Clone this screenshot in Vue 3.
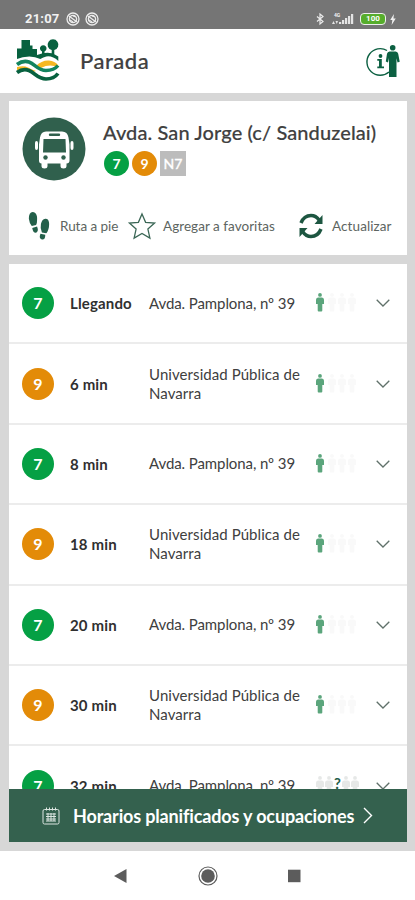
<script setup>
  import { ref } from 'vue'

  const pamplona = 'Avda. Pamplona, nº 39'
  const upna = 'Universidad Pública de Navarra'

  const arrivals = ref([
    { line: '7', time: 'Llegando', dest: pamplona, known: true },
    { line: '9', time: '6 min', dest: upna, known: true },
    { line: '7', time: '8 min', dest: pamplona, known: true },
    { line: '9', time: '18 min', dest: upna, known: true },
    { line: '7', time: '20 min', dest: pamplona, known: true },
    { line: '9', time: '30 min', dest: upna, known: true },
    { line: '7', time: '32 min', dest: pamplona, known: false },
  ])

  const signal = [2, 4, 6, 8, 10]
  const person = 'M4 0a1.8 1.8 0 1 1 0 3.8a1.8 1.8 0 1 1 0-3.8zM2 4.5h4q2 .3 2 2.3v4.2h-1.7v6.5q0 1-1 1h-2.6q-1 0-1-1V11H0V6.800q0-2 2-2.300z'
</script>

<template>
  <div class="screen">
    <div class="status">
      <span class="clock">21:07</span>
      <svg v-for="n in 2" :key="n" class="notif" viewBox="0 0 14 14">
        <circle cx="7" cy="7" r="6" />
        <circle cx="7" cy="7" r="3.600" />
        <path d="M3 4l8 6M7 4l3 1M4 8l3 2" />
      </svg>
      <div class="status-right">
        <svg class="bt" viewBox="0 0 8 12"><path d="M1 3.500l6 5L4 11V1l3 2.500-6 5" /></svg>
        <div class="net">
          <span class="net-type">4G</span>
          <svg class="net-arrows" viewBox="0 0 6 4"><path d="M0 4l1.500-3L3 4zM3.500 1h2.500L4.800 4z" /></svg>
          <svg class="bars" viewBox="0 0 15 11">
            <rect v-for="(h, i) in signal" :key="h" :x="i * 3" :y="11 - h" width="2.200" :height="h" />
          </svg>
        </div>
        <div class="battery">100</div>
        <svg class="bolt" viewBox="0 0 6 12"><path d="M4 0L0 6.500h2.300L1.500 12L6 5H3.500z" /></svg>
      </div>
    </div>

    <header class="header">
      <svg class="logo" viewBox="0 0 43 43">
        <path class="yellow" d="M1 28q7-1.500 11 .5 4 2 8 3.500-3 1.500-7 0-6-3-12-.5zM20 27q6-6 13-5.500 6 .5 9 4.500v2.500q-8-4-17 .5z" />
        <path class="dark" d="M1 19V9.500h4.500V1H14v5.500h2.500V10H21v6l5-1.500v-2a3.300 3.300 0 1 1 2.500 0V14q4-.6 7.200.3V11a5.400 5.400 0 1 1 2.600 0v4.300l4 2.200v4.500q-6-5.500-12-4.500-3 .5-6 2.500-5-2.500-11-2.500-7 0-12.300 2.500z" />
        <path class="wave green" d="M1 25.500q6-4.500 12-2.500c6 2 9 8.500 17 8.500q8 0 12-5" />
        <path class="wave" d="M1 33.500q6-4.500 12-2c6 2.500 9 8.500 17 8.500q8 0 12-5.500" />
      </svg>
      <h1>Parada</h1>
      <svg class="info" viewBox="0 0 34 33">
        <path class="ring" d="M21 5.500A13.300 13.300 0 1 0 23 27" />
        <circle cx="14.500" cy="11" r="1.900" />
        <path d="M11.300 14h4.500v7.500h2.200v1.800h-6.700v-1.800h1.700v-5.700h-1.700z" />
        <circle cx="26.700" cy="2.800" r="2.800" />
        <path d="M23.500 6.500h6.200q2 .2 2.500 2.200l1.500 8-2.200.8-1-4.300V32h-7.500V13l-1 4.400-2.200-.8 1.200-7.900q.5-2 2.500-2.200z" />
      </svg>
    </header>

    <main class="content">
      <section class="stop">
        <div class="stop-top">
          <svg class="bus" viewBox="0 0 64 64">
            <circle cx="32" cy="32" r="31.500" fill="#30604d" />
            <path fill="#fff" d="M24 14.500h16q5.500 0 6.500 6l1 7v16q0 3-3 3v2.500q0 2.500-3 2.500t-3-2.500v-2.500h-13v2.500q0 2.500-3 2.500t-3-2.500v-2.500q-2.500 0-2.500-3v-16l1-7q1-6 6-6zM13 26q0-2 1.500-2t1.500 2v5q0 2-1.500 2t-1.500-2zM48.500 26q0-2 1.500-2t1.500 2v5q0 2-1.500 2t-1.500-2z" />
            <path fill="#30604d" d="M28 16.500h9a1.200 1.200 0 0 1 0 2.400h-9a1.200 1.200 0 0 1 0-2.400zM21.500 22h22l.5 13.500h-23z" />
            <circle cx="23.500" cy="40.500" r="2.200" fill="#30604d" />
            <circle cx="41.500" cy="40.500" r="2.200" fill="#30604d" />
          </svg>
          <div class="stop-info">
            <h2>Avda. San Jorge (c/ Sanduzelai)</h2>
            <div class="lines">
              <span class="line small l7">7</span>
              <span class="line small l9">9</span>
              <span class="night">N7</span>
            </div>
          </div>
        </div>
        <div class="actions">
          <svg class="steps" viewBox="0 0 22 30">
            <path d="M4.500 0C8 0 9.500 4 9 8.500q0 4-1 5L3.500 14.500Q1 11.500.5 7 .5 0 4.500 0zM4 16.500l5-1.500q2 5-1 6.500-3 .5-4-5zM17.500 7c4-.5 4.500 5 3.700 9-.7 3-1.700 5.500-2.700 6l-4.500-.8q-2-4-1-8.700 1-5 4.500-5.500zM12.500 22.500l5 1q0 5.500-3.500 5-3.500-1-1.500-6z" />
          </svg>
          <span class="walk">Ruta a pie</span>
          <svg class="star" viewBox="0 0 28 28"><path d="M14 2l3.600 8.300 9 .8-6.700 6 2 9L14 21.500 6.100 26.100l2-9-6.700-6 9-.8z" /></svg>
          <span class="fav">Agregar a favoritas</span>
          <svg class="reload" viewBox="0 0 24 26">
            <path class="arc" d="M2 10Q5 2.500 12 2.500q5 0 8 4.500M22 16q-3 7.500-10 7.500-5 0-8-4.500" />
            <path d="M23.500 2v9h-8zM.5 24v-9h8z" />
          </svg>
          <span class="update">Actualizar</span>
        </div>
      </section>

      <section class="arrivals">
        <div v-for="(a, i) in arrivals" :key="i" class="row">
          <span class="line" :class="'l' + a.line">{{ a.line }}</span>
          <strong>{{ a.time }}</strong>
          <span class="dest" :class="{ tight: a.dest === pamplona }">{{ a.dest }}</span>
          <svg v-if="a.known" class="people" viewBox="0 0 44 20">
            <path :d="person" fill="#5ba57c" />
            <path v-for="n in 3" :key="n" :d="person" :transform="'translate(' + (n * 10 + 2) + ' 0)'" fill="#f9f9f9" />
          </svg>
          <div v-else class="people unknown">
            <svg viewBox="0 0 44 20">
              <path v-for="x in [0, 9, 26, 35]" :key="x" :d="person" :transform="'translate(' + x + ' 0)'" fill="#e6e8e7" />
            </svg>
            <b>?</b>
          </div>
          <svg class="chevron" viewBox="0 0 14 8"><path d="M.7.7L7 7 13.300.7" /></svg>
        </div>
        <button type="button" class="schedule">
          <svg class="calendar" viewBox="0 0 18 18">
            <rect x="1" y="2.500" width="16" height="14.500" rx="1.500" />
            <path d="M4.500.5v3M7.500.5v3M10.500.5v3M13.500.5v3M4 7h10M4 9.500h10M4 12h10M4 14h10M6 6v8M9 6v8M12 6v8" />
          </svg>
          <span>Horarios planificados y ocupaciones</span>
          <svg class="next" viewBox="0 0 10 17"><path d="M1 1l7.500 7.500L1 16" /></svg>
        </button>
      </section>
    </main>

    <nav class="nav">
      <svg viewBox="0 0 20 20"><path d="M3 10l12.500-7v14z" /></svg>
      <svg viewBox="0 0 20 20"><circle cx="10" cy="10" r="9" fill="none" stroke="#5c5c5c" stroke-width="1.200" /><circle cx="10" cy="10" r="6.800" /></svg>
      <svg viewBox="0 0 20 20"><rect x="4" y="3.700" width="12.500" height="12.500" /></svg>
    </nav>
  </div>
</template>

<style>
  body {
    margin: 0;
  }
</style>

<style scoped>
  .screen {
    display: flex;
    flex-direction: column;
    width: 415px;
    height: 900px;
    overflow: hidden;
    background: #fff;
    color: #404040;
    font-family: Lato, "Liberation Sans", sans-serif;
  }

  .screen * {
    box-sizing: border-box;
  }

  svg {
    display: block;
    flex: none;
    overflow: visible;
  }

  .status {
    display: flex;
    align-items: center;
    height: 29px;
    flex: none;
    padding: 9px 19px 0 25px;
    background: #757575;
    color: #f2f2f2;
  }

  .clock {
    width: 41px;
    font: 700 13px/20px Roboto, sans-serif;
    letter-spacing: 0.2px;
  }

  .notif {
    width: 14px;
    height: 14px;
    margin-right: 5px;
    fill: none;
    stroke: #ececec;
    stroke-width: 1.3;
  }

  .status-right {
    display: flex;
    align-items: center;
    margin-left: auto;
  }

  .bt {
    width: 8px;
    height: 12px;
    margin-right: 8px;
    fill: none;
    stroke: #ececec;
    stroke-width: 1.2;
  }

  .net {
    position: relative;
    width: 22px;
    height: 12px;
    margin-right: 6px;
    fill: #e4e4e4;
  }

  .net-type {
    position: absolute;
    top: 0;
    left: 2px;
    font: 700 5px/5px Roboto, sans-serif;
  }

  .net-arrows {
    position: absolute;
    left: 0;
    bottom: 1px;
    width: 6px;
    height: 4px;
  }

  .bars {
    position: absolute;
    right: 0;
    bottom: 1px;
    width: 15px;
    height: 11px;
  }

  .battery {
    width: 26px;
    height: 12px;
    margin-right: 4px;
    border: 1.5px solid #eee;
    border-radius: 4px;
    background: #56ad2c;
    color: #fff;
    font: 700 8px/10px Roboto, sans-serif;
    text-align: center;
  }

  .bolt {
    width: 6px;
    height: 11px;
    fill: #f0f0f0;
  }

  .header {
    display: flex;
    align-items: center;
    height: 64px;
    flex: none;
    padding: 0 15px 0 16px;
  }

  .logo {
    width: 43px;
    height: 43px;
    margin-top: -1px;
  }

  .dark {
    fill: #07613f;
  }

  .yellow {
    fill: #f5b722;
  }

  .wave {
    fill: none;
    stroke: #07613f;
    stroke-width: 3.6;
  }

  .wave.green {
    stroke: #12845f;
  }

  h1 {
    margin: 0 0 0 21px;
    font-size: 22px;
    font-weight: 500;
    line-height: 28px;
    letter-spacing: 0.5px;
    -webkit-text-stroke: 0.2px #404040;
  }

  .info {
    width: 34px;
    height: 33px;
    margin: 1px 0 0 auto;
    fill: #0c6042;
  }

  .ring {
    fill: none;
    stroke: #0c6042;
    stroke-width: 1.4;
  }

  .content {
    display: flex;
    flex-direction: column;
    gap: 9px;
    height: 758px;
    flex: none;
    padding: 8px 8px 9px 9px;
    background: #d7d7d7;
  }

  .stop {
    height: 154px;
    flex: none;
    background: #fff;
  }

  .stop-top {
    display: flex;
    padding: 16px 0 0 13px;
  }

  .bus {
    width: 64px;
    height: 64px;
  }

  .stop-info {
    margin-left: 17px;
  }

  h2 {
    margin: 2px 0 6px;
    font-size: 20px;
    font-weight: 500;
    line-height: 26px;
    letter-spacing: 0.1px;
    white-space: nowrap;
    -webkit-text-stroke: 0.15px #404040;
  }

  .lines {
    display: flex;
    gap: 3px;
    padding-left: 1px;
  }

  .line {
    width: 32px;
    height: 32px;
    border-radius: 50%;
    color: #fff;
    font-size: 16px;
    font-weight: 700;
    line-height: 32px;
    text-align: center;
  }

  .line.small {
    width: 25px;
    height: 25px;
    font-size: 14px;
    line-height: 25px;
  }

  .l7 {
    background: #05a044;
  }

  .l9 {
    background: #e38b08;
  }

  .night {
    width: 26px;
    height: 25px;
    background: #bcbcbc;
    color: #fff;
    font-size: 14px;
    font-weight: 500;
    line-height: 25px;
    text-align: center;
    -webkit-text-stroke: 0.3px #fff;
  }

  .actions {
    display: flex;
    align-items: center;
    height: 30px;
    margin-top: 30px;
    padding-left: 19px;
    color: #5d6561;
    font-size: 13.5px;
    white-space: nowrap;
  }

  .steps {
    width: 22px;
    height: 29px;
    fill: #23604a;
  }

  .walk {
    width: 58px;
    margin-left: 10px;
    letter-spacing: -0.05px;
  }

  .star {
    width: 28px;
    height: 28px;
    margin-left: 10px;
    fill: none;
    stroke: #3b6756;
    stroke-width: 1.3;
  }

  .fav {
    width: 112px;
    margin-left: 7px;
    letter-spacing: 0.04px;
  }

  .reload {
    width: 24px;
    height: 26px;
    margin-left: 24px;
    fill: #1d5641;
  }

  .arc {
    fill: none;
    stroke: #1d5641;
    stroke-width: 3.5;
  }

  .update {
    margin-left: 9px;
    letter-spacing: 0.1px;
  }

  .arrivals {
    position: relative;
    flex: 1;
    min-height: 0;
    overflow: hidden;
    background: #fff;
  }

  .row {
    display: flex;
    align-items: center;
    height: 80.4px;
    padding: 0 17px 0 13px;
    border-bottom: 2px solid #ececec;
  }

  .row strong {
    width: 79px;
    margin-left: 16px;
    color: #303030;
    font-size: 15px;
    font-weight: 700;
    letter-spacing: 0.15px;
  }

  .dest {
    width: 158px;
    margin-right: 9px;
    font-size: 15px;
    line-height: 19px;
    letter-spacing: 0.07px;
  }

  .dest.tight {
    letter-spacing: -0.09px;
  }

  .people {
    width: 44px;
    height: 20px;
  }

  .people.unknown {
    position: relative;
  }

  .unknown svg {
    width: 44px;
    height: 20px;
  }

  .unknown b {
    position: absolute;
    top: -1px;
    left: 18px;
    color: #23604a;
    font-size: 15px;
    line-height: 16px;
  }

  .chevron {
    width: 14px;
    height: 8px;
    margin-left: auto;
    fill: none;
    stroke: #60716a;
    stroke-width: 1.3;
  }

  .schedule {
    position: absolute;
    left: 0;
    right: 0;
    bottom: 0;
    display: flex;
    align-items: center;
    height: 53px;
    padding: 0 0 0 33px;
    border: 0;
    background: #34614e;
    color: #fff;
    font: 700 18px/24px Lato, sans-serif;
    letter-spacing: -0.15px;
    white-space: nowrap;
  }

  .schedule span {
    width: 281px;
    margin-left: 13px;
    text-align: left;
  }

  .calendar {
    width: 18px;
    height: 18px;
    fill: none;
    stroke: #dce6e1;
    stroke-width: 1;
  }

  .next {
    width: 10px;
    height: 17px;
    margin-left: 9px;
    fill: none;
    stroke: #fff;
    stroke-width: 1.4;
  }

  .nav {
    display: flex;
    justify-content: space-between;
    width: 193px;
    margin: 15px 0 0 111px;
    fill: #5c5c5c;
  }

  .nav svg {
    width: 20px;
    height: 20px;
  }
</style>
